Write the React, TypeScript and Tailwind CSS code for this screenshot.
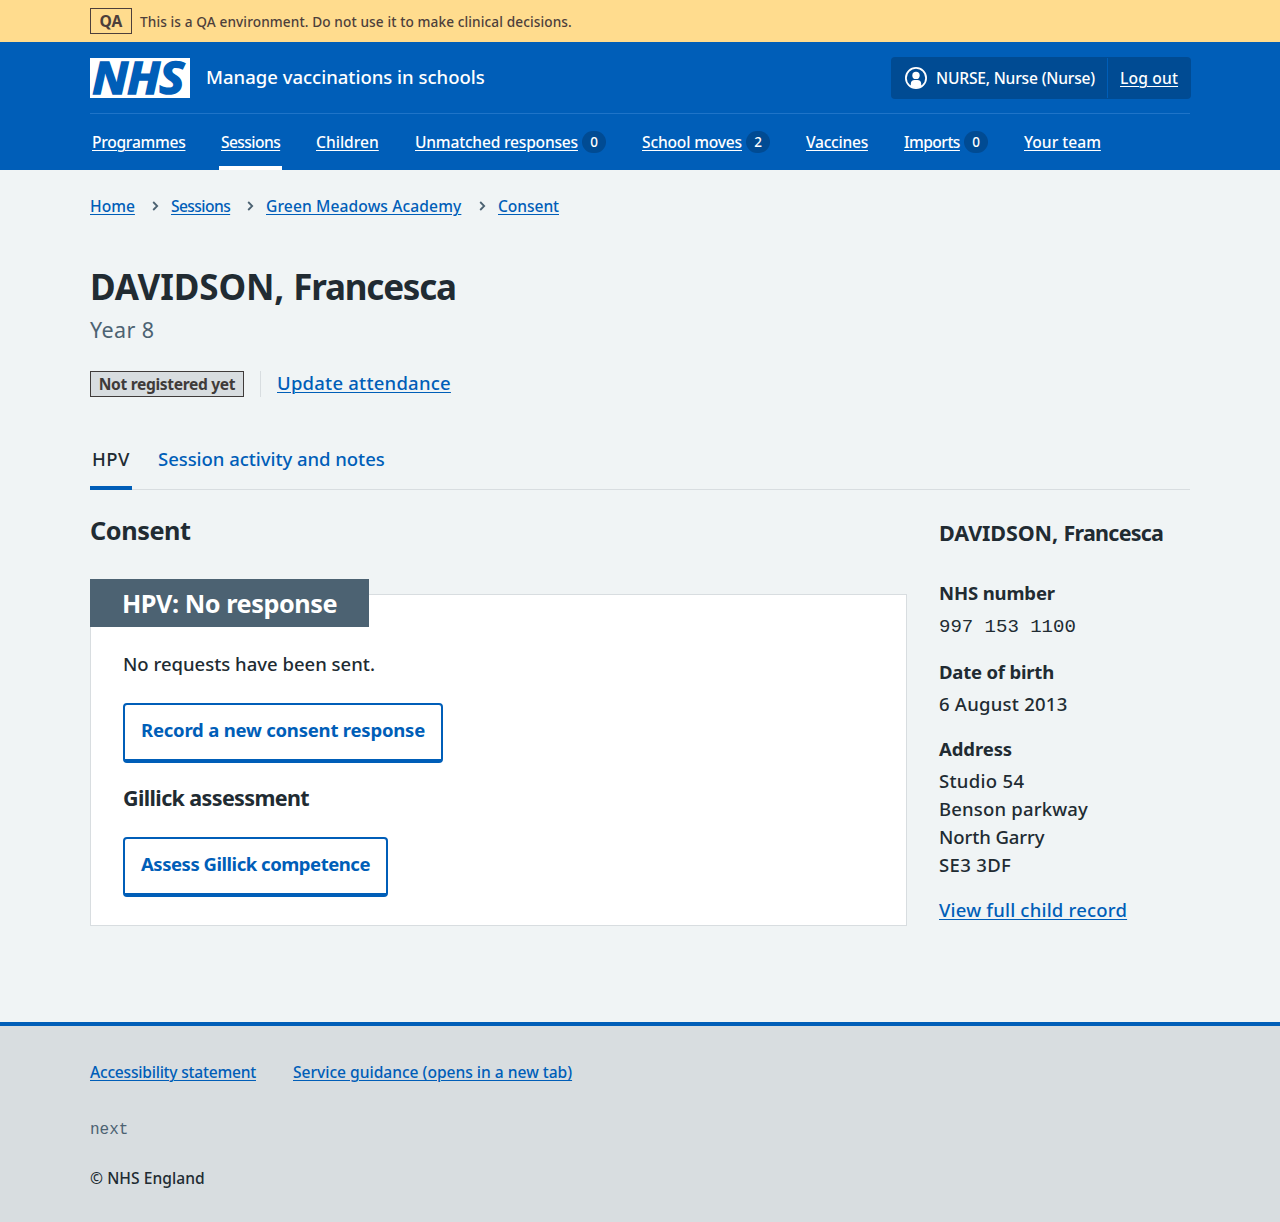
import type { ReactNode } from 'react';

const LINK = 'underline decoration-1 underline-offset-[2px] whitespace-nowrap';

function Badge({ children }: { children: ReactNode }) {
  return (
    <span className="ml-1 flex h-[22px] w-6 items-center justify-center rounded-full bg-[#004b93] pt-0.5 text-[13.5px] leading-none text-white">
      {children}
    </span>
  );
}

const NAV = [
  { label: 'Programmes', width: 'w-[93px]', spacing: 'tracking-[-0.28px]' },
  { label: 'Sessions', width: 'w-[59px]', spacing: 'tracking-[-0.58px]', current: true },
  { label: 'Children', width: 'w-[63px]', spacing: 'tracking-normal' },
  { label: 'Unmatched responses', width: 'w-[163px]', spacing: 'tracking-[-0.21px]', count: 0 },
  { label: 'School moves', width: 'w-[100px]', spacing: 'tracking-[-0.17px]', count: 2 },
  { label: 'Vaccines', width: 'w-[62px]', spacing: 'tracking-[-0.26px]' },
  { label: 'Imports', width: 'w-[56px]', spacing: 'tracking-[-0.53px]', count: 0 },
  { label: 'Your team', width: 'w-[77px]', spacing: 'tracking-normal' },
];

const CRUMBS = [
  { label: 'Home', width: 'w-[45px]', spacing: 'tracking-normal' },
  { label: 'Sessions', width: 'w-[59px]', spacing: 'tracking-[-0.58px]' },
  { label: 'Green Meadows Academy', width: 'w-[196px]', spacing: 'tracking-[0.11px]' },
  { label: 'Consent', width: 'w-[61px]', spacing: 'tracking-[-0.07px]' },
];

function Chevron() {
  return (
    <svg className="mr-[12.5px] ml-[16.5px] h-[10px] w-[7px]" viewBox="0 0 7 10" fill="none" stroke="#4c6272" strokeWidth="1.8">
      <path d="M1.2 1 5.2 5 1.2 9" />
    </svg>
  );
}

function Logo() {
  return (
    <svg className="h-10 w-[100px] overflow-visible" viewBox="0 0 100 40" role="img" aria-label="NHS">
      <rect width="100" height="40" fill="#fff" />
      <text
        transform="scale(1.06 1)"
        x="2.2 35 65.4"
        y="36.3"
        fill="#005eb8"
        stroke="#005eb8"
        strokeWidth="1.5"
        fontFamily="Noto Sans, sans-serif"
        fontSize="44.5"
        fontWeight="700"
        fontStyle="italic"
      >
        NHS
      </text>
    </svg>
  );
}

function Header() {
  return (
    <header className="h-32 bg-[#005eb8] text-white">
      <div className="mx-auto flex w-[1100px] flex-col">
        <div className="flex h-[72px] items-center border-b border-[#1f74c8] pt-px">
          <Logo />
          <span className="-mt-0.5 ml-4 text-[18.5px] leading-7">Manage vaccinations in schools</span>
          <div className="-mr-px ml-auto flex h-[42px] w-[300px] items-center rounded bg-[#004b93] text-[15.6px] leading-6">
            <div className="flex h-10 w-[217px] items-center border-r border-[#005eb8] pl-[14px]">
              <svg className="h-[22px] w-[22px]" viewBox="0 0 22 22">
                <circle cx="11" cy="11" r="10.1" fill="none" stroke="#fff" strokeWidth="1.8" />
                <circle cx="11" cy="8.4" r="3.7" fill="#fff" />
                <path d="M5.8 19.2V17a4 4 0 0 1 4-4h2.4a4 4 0 0 1 4 4v2.2a9.5 9.5 0 0 1-10.4 0Z" fill="#fff" />
              </svg>
              <span className="ml-[9px] whitespace-nowrap tracking-[-0.19px]">NURSE, Nurse (Nurse)</span>
            </div>
            <a className={`ml-3 tracking-[0.17px] ${LINK}`}>Log out</a>
          </div>
        </div>
        <nav className="flex h-14 gap-8 text-[15.6px] leading-6">
          {NAV.map((item) => (
            <div
              key={item.label}
              className={`flex items-center border-y-4 border-t-transparent px-0.5 ${item.current ? 'border-b-white' : 'border-b-transparent'}`}
            >
              <a className={`${item.width} ${item.spacing} ${LINK}`}>{item.label}</a>
              {item.count !== undefined && <Badge>{item.count}</Badge>}
            </div>
          ))}
        </nav>
      </div>
    </header>
  );
}

function SecondaryButton({ children, className }: { children: ReactNode; className: string }) {
  return (
    <button
      className={`flex h-[60px] items-center justify-center rounded border-2 border-b-4 border-[#005eb8] bg-white pb-1 text-[18.5px] leading-7 font-bold whitespace-nowrap text-[#005eb8] ${className}`}
    >
      {children}
    </button>
  );
}

function ConsentCard() {
  return (
    <section className="mt-[47px] h-[332px] w-[817px] border border-[#d8dde0] bg-white px-8">
      <h3 className="-mt-4 -ml-[33px] flex h-12 w-[279px] items-center bg-[#4c6272] pl-8 text-[25.25px] leading-8 font-bold tracking-[-0.46px] whitespace-nowrap text-white">
        HPV: No response
      </h3>
      <p className="mt-[23px] leading-7">No requests have been sent.</p>
      <SecondaryButton className="mt-[25px] w-80 tracking-[-0.21px]">Record a new consent response</SecondaryButton>
      <h4 className="mt-[21px] text-[21.5px] leading-7 font-bold tracking-[-0.62px]">Gillick assessment</h4>
      <SecondaryButton className="mt-[25px] w-[265px] tracking-[-0.47px]">Assess Gillick competence</SecondaryButton>
    </section>
  );
}

function ChildSummary() {
  return (
    <aside className="ml-8 leading-7">
      <h3 className="mt-[29px] text-[21.5px] font-bold whitespace-nowrap">
        <span className="tracking-[-0.1px]">DAVIDSON, </span>
        <span className="tracking-[-0.75px]">Francesca</span>
      </h3>
      <dl>
        <dt className="mt-8 font-bold tracking-[-0.13px]">NHS number</dt>
        <dd className="mt-1.5 font-['Liberation_Mono',monospace] text-[19px] font-normal">997 153 1100</dd>
        <dt className="mt-[17px] font-bold tracking-[-0.2px]">Date of birth</dt>
        <dd className="mt-1 tracking-[0.24px]">6 August 2013</dd>
        <dt className="mt-[17px] font-bold tracking-[-0.1px]">Address</dt>
        <dd className="mt-1">
          <span className="block tracking-[0.3px]">Studio 54</span>
          <span className="block tracking-[0.18px]">Benson parkway</span>
          <span className="block tracking-[-0.1px]">North Garry</span>
          <span className="block tracking-[0.35px]">SE3 3DF</span>
        </dd>
      </dl>
      <p className="mt-[17px] text-[#005eb8]">
        <a className={`tracking-[0.2px] ${LINK}`}>View full child record</a>
      </p>
    </aside>
  );
}

export default function App() {
  return (
    <div className="flex min-h-[1222px] flex-col bg-[#f0f4f5] font-['Noto_Sans','Open_Sans',sans-serif] text-[18.5px] font-medium text-[#212b32]">
      <div className="h-[42px] bg-[#ffdc8e] text-[#4d3f3b]">
        <div className="mx-auto flex h-full w-[1100px] items-center">
          <strong className="flex h-[26px] w-[42px] items-center justify-center border border-[#4d3f3b] text-[15.6px] leading-6 font-bold">
            QA
          </strong>
          <span className="ml-2 pt-0.5 text-[13.65px] tracking-[0.1px] whitespace-nowrap">
            This is a QA environment. Do not use it to make clinical decisions.
          </span>
        </div>
      </div>
      <Header />
      <main className="mx-auto h-[852px] w-[1100px] pt-6">
        <nav className="flex h-6 items-center text-[15.6px] leading-6 text-[#005eb8]">
          {CRUMBS.map((crumb, i) => (
            <div key={crumb.label} className="flex items-center">
              {i > 0 && <Chevron />}
              <a className={`${crumb.width} ${crumb.spacing} ${LINK}`}>{crumb.label}</a>
            </div>
          ))}
        </nav>
        <h1 className="mt-[46px] text-[35px] leading-[46px] font-bold">
          <span className="tracking-[-0.1px]">DAVIDSON, </span>
          <span className="tracking-[-1.2px]">Francesca</span>
        </h1>
        <p className="mt-1 text-[21.5px] leading-8 font-normal tracking-[0.4px] text-[#4c6272]">Year 8</p>
        <div className="mt-[25px] flex h-[26px] items-center">
          <strong className="flex h-[26px] w-[154px] items-center justify-center border border-[#3f3b3a] bg-[#d8dde0] text-[15.6px] leading-6 font-bold tracking-[-0.33px] whitespace-nowrap text-[#3f3b3a]">
            Not registered yet
          </strong>
          <div className="ml-4 flex h-[26px] items-center border-l border-[#d8dde0] pl-4 text-[#005eb8]">
            <a className={`-mt-0.5 tracking-[0.23px] ${LINK}`}>Update attendance</a>
          </div>
        </div>
        <div className="mt-8 flex h-[61px] gap-6 border-b border-[#d8dde0]">
          <a className="-mb-px flex w-[42px] items-center border-y-4 border-t-transparent border-b-[#005eb8] pb-0.5 pl-0.5 tracking-[0.5px]">
            HPV
          </a>
          <a className="-mb-px flex items-center border-y-4 border-transparent pb-0.5 pl-0.5 tracking-[-0.04px] text-[#005eb8]">
            Session activity and notes
          </a>
        </div>
        <div className="flex">
          <div>
            <h2 className="mt-[23px] text-[25.25px] leading-[34px] font-bold tracking-[-0.42px]">Consent</h2>
            <ConsentCard />
          </div>
          <ChildSummary />
        </div>
      </main>
      <footer className="h-[200px] border-t-4 border-[#005eb8] bg-[#d8dde0] text-[15.6px] leading-6">
        <div className="mx-auto flex w-[1100px] flex-col pt-[34px]">
          <div className="flex text-[#005eb8]">
            <a className={`w-[166px] tracking-[-0.23px] ${LINK}`}>Accessibility statement</a>
            <a className={`ml-[37px] tracking-[-0.02px] ${LINK}`}>Service guidance (opens in a new tab)</a>
          </div>
          <p className="mt-[34px] font-['Liberation_Mono',monospace] text-base font-normal text-[#4c6272]">next</p>
          <p className="mt-6 tracking-[0.05px]">© NHS England</p>
        </div>
      </footer>
    </div>
  );
}
